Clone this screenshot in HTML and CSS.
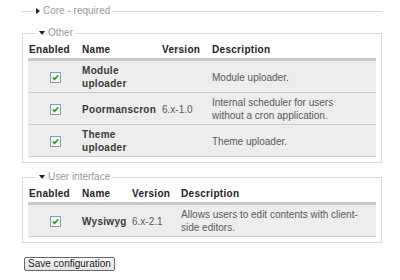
FILE: index.html
```html
<!DOCTYPE html>
<html lang="en">
<head>
    <meta charset="UTF-8">
    <title>Modules</title>
    <link rel="stylesheet" href="styles.css">
</head>
<body>
    <fieldset class="group collapsed">
        <legend><span class="arrow-right"></span>Core - required</legend>
    </fieldset>

    <fieldset class="group">
        <legend><span class="arrow-down"></span>Other</legend>
        <table class="modules other">
            <colgroup>
                <col class="c-enabled"><col class="c-name"><col class="c-version"><col>
            </colgroup>
            <thead>
                <tr><th>Enabled</th><th>Name</th><th>Version</th><th>Description</th></tr>
            </thead>
            <tbody>
                <tr>
                    <td class="check"><span class="cb"><svg width="11" height="11" viewBox="0 0 11 11"><rect x="0.5" y="0.5" width="10" height="10" fill="#f3f5f6" stroke="#8d9aa6"/><path d="M2.8 5.6 L4.6 7.4 L8.2 3.3" fill="none" stroke="#2b9a2b" stroke-width="1.6"/></svg></span></td>
                    <td class="name">Module uploader</td>
                    <td class="version"></td>
                    <td class="desc">Module uploader.</td>
                </tr>
                <tr>
                    <td class="check"><span class="cb"><svg width="11" height="11" viewBox="0 0 11 11"><rect x="0.5" y="0.5" width="10" height="10" fill="#f3f5f6" stroke="#8d9aa6"/><path d="M2.8 5.6 L4.6 7.4 L8.2 3.3" fill="none" stroke="#2b9a2b" stroke-width="1.6"/></svg></span></td>
                    <td class="name">Poormanscron</td>
                    <td class="version">6.x-1.0</td>
                    <td class="desc">Internal scheduler for users without a cron application.</td>
                </tr>
                <tr>
                    <td class="check"><span class="cb"><svg width="11" height="11" viewBox="0 0 11 11"><rect x="0.5" y="0.5" width="10" height="10" fill="#f3f5f6" stroke="#8d9aa6"/><path d="M2.8 5.6 L4.6 7.4 L8.2 3.3" fill="none" stroke="#2b9a2b" stroke-width="1.6"/></svg></span></td>
                    <td class="name">Theme uploader</td>
                    <td class="version"></td>
                    <td class="desc">Theme uploader.</td>
                </tr>
            </tbody>
        </table>
    </fieldset>

    <fieldset class="group">
        <legend><span class="arrow-down"></span>User interface</legend>
        <table class="modules ui">
            <colgroup>
                <col class="c-enabled"><col class="c-name"><col class="c-version"><col>
            </colgroup>
            <thead>
                <tr><th>Enabled</th><th>Name</th><th>Version</th><th>Description</th></tr>
            </thead>
            <tbody>
                <tr>
                    <td class="check"><span class="cb"><svg width="11" height="11" viewBox="0 0 11 11"><rect x="0.5" y="0.5" width="10" height="10" fill="#f3f5f6" stroke="#8d9aa6"/><path d="M2.8 5.6 L4.6 7.4 L8.2 3.3" fill="none" stroke="#2b9a2b" stroke-width="1.6"/></svg></span></td>
                    <td class="name">Wysiwyg</td>
                    <td class="version">6.x-2.1</td>
                    <td class="desc">Allows users to edit contents with client-side editors.</td>
                </tr>
            </tbody>
        </table>
    </fieldset>

    <div class="actions">
        <button class="save">Save configuration</button>
    </div>
</body>
</html>
```

FILE: styles.css
```css
body {
    font-family: "Liberation Sans", Arial, sans-serif;
    font-size: 10px;
    color: #5a5a5a;
    margin: 0;
    padding: 5px 18px 0 22px;
    background: #fff;
}
.group {
    margin: 0 0 8px 0;
    padding: 0 5px 5px 5px;
    border: 1px solid #d9d9d9;
    min-width: 0;
}
.group legend {
    margin-left: 8px;
    padding: 0 2px 0 3px;
    line-height: 12px;
    color: #999;
}
.collapsed {
    border-width: 1px 0 0 0;
    padding: 0;
    margin-bottom: 10px;
}
.collapsed legend {
    margin-left: 11px;
}
.arrow-right {
    display: inline-block;
    width: 0;
    height: 0;
    border-left: 4px solid #222;
    border-top: 3px solid transparent;
    border-bottom: 3px solid transparent;
    margin-right: 3px;
    vertical-align: 0;
}
.arrow-down {
    display: inline-block;
    width: 0;
    height: 0;
    border-top: 4px solid #222;
    border-left: 3px solid transparent;
    border-right: 3px solid transparent;
    margin-right: 3px;
    vertical-align: 1px;
}
.modules {
    width: 100%;
    border-collapse: collapse;
    table-layout: fixed;
    margin-top: 2px;
}
.modules th {
    text-align: left;
    font-weight: bold;
    color: #222;
    letter-spacing: 0.3px;
    padding: 3px 0 2px 1px;
    line-height: 12px;
    border-bottom: 3px solid #cbcbcb;
}
.modules td {
    background: #ededed;
    border-bottom: 1px solid #cdcdcd;
    padding: 3px 10px 2px 1px;
    line-height: 13px;
    vertical-align: middle;
}
.other .c-enabled { width: 53px; }
.other .c-name { width: 80px; }
.other .c-version { width: 50px; }
.ui .c-enabled { width: 53px; }
.ui .c-name { width: 50px; }
.ui .c-version { width: 49px; }
.ui td.desc { padding-right: 2px; }
.modules td.check {
    text-align: center;
    padding-right: 0;
}
.modules td.name {
    font-weight: bold;
    color: #3a3a3a;
    letter-spacing: 0.3px;
    padding-right: 0;
}
.modules td.version {
    padding-right: 0;
}
.cb {
    display: inline-block;
    width: 11px;
    height: 11px;
    vertical-align: middle;
}
.cb svg {
    display: block;
}
.actions {
    padding: 6px 0 0 2px;
}
.save {
    display: block;
    font-family: "Liberation Sans", Arial, sans-serif;
    font-size: 10px;
    line-height: 12px;
    color: #222;
    margin: 0;
    padding: 0 3px;
    border: 1px solid #666;
    border-radius: 2px;
    background: linear-gradient(#fafafa, #e4e4e4);
}
```
